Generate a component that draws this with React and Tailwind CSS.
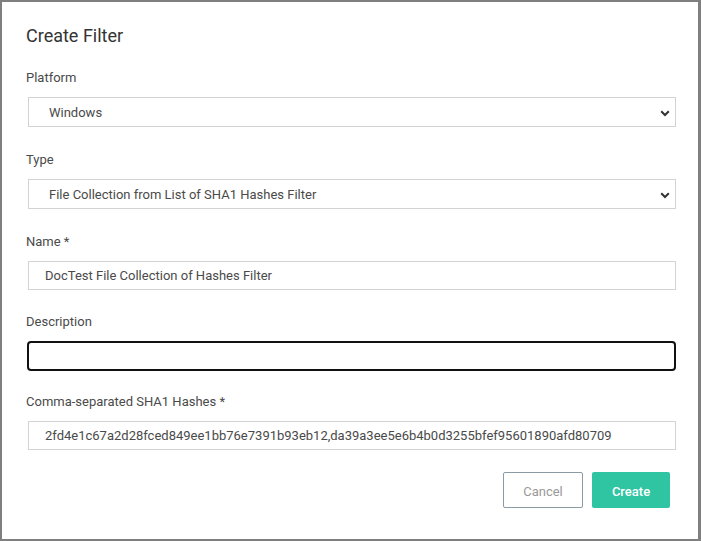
export default function App() {
  const Chevron = () => (
    <svg width="10" height="7" viewBox="0 0 10 7" className="absolute right-[5px] top-[12px]">
      <path d="M1.2 1.2 L5 5 L8.8 1.2" fill="none" stroke="#333" strokeWidth="2" />
    </svg>
  );
  const Label = ({ children }) => (
    <div className="h-5 leading-5 pt-px text-[13px] text-[#4a4a4a]">{children}</div>
  );
  return (
    <div
      className="w-[701px] h-[541px] bg-white border-2 border-r-[3px] border-[#7f7f7f] pt-[22px] pl-6 pr-[22px] flex flex-col"
      style={{ fontFamily: "Roboto, 'Liberation Sans', sans-serif" }}
    >
      <div className="h-6 leading-6 text-[18px] text-[#333]">Create Filter</div>

      <div className="mt-[19px]">
        <Label>Platform</Label>
        <div className="relative mt-[10px] ml-[2px] h-[30px] border border-[#d3d3d3] pl-5 pt-[2px] flex items-center text-[13px] text-[#4a4a4a]">
          Windows
          <Chevron />
        </div>
      </div>

      <div className="mt-[22px]">
        <Label>Type</Label>
        <div className="relative mt-[10px] ml-[2px] h-[30px] border border-[#d3d3d3] pl-5 pt-[2px] flex items-center text-[13px] text-[#4a4a4a]">
          File Collection from List of SHA1 Hashes Filter
          <Chevron />
        </div>
      </div>

      <div className="mt-[22px]">
        <Label>Name *</Label>
        <div className="mt-[10px] ml-[2px] h-[29px] border border-[#d3d3d3] pl-4 flex items-center text-[13px] text-[#4a4a4a]">
          DocTest File Collection of Hashes Filter
        </div>
      </div>

      <div className="mt-[21px]">
        <Label>Description</Label>
        <div className="mt-[10px] ml-[1px] h-[30px] border-2 border-[#111] rounded-[4px]" />
      </div>

      <div className="mt-5">
        <Label>Comma-separated SHA1 Hashes *</Label>
        <div className="mt-[10px] ml-[2px] h-[29px] border border-[#d3d3d3] pl-4 flex items-center text-[13px] text-[#4a4a4a] whitespace-nowrap">
          2fd4e1c67a2d28fced849ee1bb76e7391b93eb12,da39a3ee5e6b4b0d3255bfef95601890afd80709
        </div>
      </div>

      <div className="mt-[22px] pr-[6px] flex justify-end gap-[9px]">
        <div className="w-[80px] h-[36px] border border-[#8c9aa3] rounded-[2px] pt-[3px] flex items-center justify-center text-[13px] text-[#999]">
          Cancel
        </div>
        <div className="w-[78px] h-[36px] bg-[#2fc4a2] rounded-[2px] pt-[3px] flex items-center justify-center text-[13px] font-medium text-white">
          Create
        </div>
      </div>
    </div>
  );
}
